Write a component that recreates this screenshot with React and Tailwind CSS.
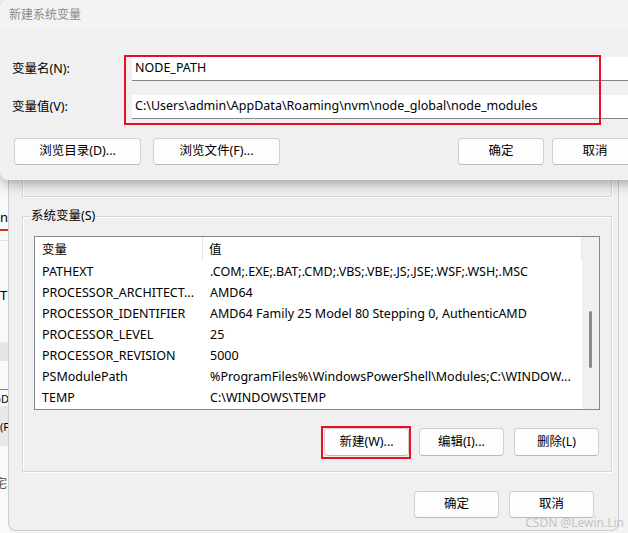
import React from "react";

function Btn({ className = "", children }) {
  return (
    <div
      className={
        "flex items-center justify-center bg-[#fdfdfd] border border-[#d0d0d0] border-b-[#b9b9b9] rounded-[4px] text-[12.5px] text-black " +
        className
      }
    >
      {children}
    </div>
  );
}

const rows = [
  ["PATHEXT", ".COM;.EXE;.BAT;.CMD;.VBS;.VBE;.JS;.JSE;.WSF;.WSH;.MSC"],
  ["PROCESSOR_ARCHITECT...", "AMD64"],
  ["PROCESSOR_IDENTIFIER", "AMD64 Family 25 Model 80 Stepping 0, AuthenticAMD"],
  ["PROCESSOR_LEVEL", "25"],
  ["PROCESSOR_REVISION", "5000"],
  ["PSModulePath", "%ProgramFiles%\\WindowsPowerShell\\Modules;C:\\WINDOW..."],
  ["TEMP", "C:\\WINDOWS\\TEMP"],
];

export default function App() {
  return (
    <div className="relative w-[628px] h-[533px] overflow-hidden bg-[#f3f3f3] font-['Noto_Sans','Noto_Sans_CJK_SC',sans-serif] text-black">
      {/* window behind, left strip */}
      <div className="absolute left-0 top-0 w-[9px] h-[533px] bg-[#f9f9f9] overflow-hidden flex flex-col text-[13px] leading-none">
        <div className="h-[205px] shrink-0" />
        <div className="h-[24px] shrink-0 flex items-center justify-end whitespace-nowrap pr-[1px]">admin</div>
        <div className="h-[2px] shrink-0 bg-[#d42b2b]" />
        <div className="h-[10px] shrink-0 border-b border-[#e3e3e3]" />
        <div className="h-[45px] shrink-0" />
        <div className="h-[18px] shrink-0 flex items-center whitespace-nowrap">TE</div>
        <div className="h-[38px] shrink-0" />
        <div className="h-[19px] shrink-0 bg-[#e6e6e6]" />
        <div className="h-[28px] shrink-0" />
        <div className="h-[17px] shrink-0 border-t border-[#4a8fd8] flex items-center justify-end whitespace-nowrap text-[11px]">oD</div>
        <div className="h-[40px] shrink-0 bg-[#e8e8e8] flex items-center whitespace-nowrap text-[11px]">(F</div>
        <div className="h-[27px] shrink-0" />
        <div className="h-[22px] shrink-0 flex items-center whitespace-nowrap text-[12px] text-[#555] -ml-[5px]">宅</div>
      </div>

      {/* environment variables window */}
      <div className="absolute left-[8px] top-0 w-[611px] h-[531px] bg-[#f0f0f0] border-l border-r border-b border-[#cbcbcb] rounded-b-[8px] flex flex-col">
        {/* user variables group (bottom part visible) */}
        <div className="ml-[13px] w-[590px] h-[197px] shrink-0 border border-[#d6d6d6] shadow-[1px_1px_0_#ffffff,inset_1px_1px_0_#ffffff]" />

        {/* system variables group */}
        <div className="relative ml-[13px] mt-[19px] w-[590px] h-[256px] shrink-0 border border-[#d6d6d6] shadow-[1px_1px_0_#ffffff,inset_1px_1px_0_#ffffff] pl-[11px] pt-[19px] pr-[12px] flex flex-col">
          <div className="absolute left-[7px] top-[-10px] px-[1px] bg-[#f0f0f0] text-[12.5px] leading-[18px]">系统变量(S)</div>

          <div className="w-[566px] h-[174px] border border-[#828790] bg-white flex text-[12.5px]">
            <div className="flex-1 flex flex-col">
              <div className="h-[23px] flex border-r border-[#e8e8e8] shrink-0">
                <div className="w-[168px] pl-[7px] pt-[3px] flex items-center border-r border-[#e3e3e3]">变量</div>
                <div className="pl-[6px] pt-[3px] flex items-center">值</div>
              </div>
              {rows.map(([k, v]) => (
                <div key={k} className="h-[21px] pt-[4px] flex items-center whitespace-nowrap shrink-0">
                  <div className="w-[168px] pl-[7px]">{k}</div>
                  <div className="pl-[7px]">{v}</div>
                </div>
              ))}
            </div>
            <div className="w-[17px] bg-[#f0f0f0] flex flex-col items-center pt-[74px]">
              <div className="w-[3px] h-[57px] rounded-full bg-[#8a8a8a]" />
            </div>
          </div>

          <div className="mt-[18px] flex justify-end gap-[10px]">
            <div className="relative">
              <Btn className="w-[85px] h-[28px]">新建(W)...</Btn>
              <div className="absolute left-[-3px] right-[-2px] top-[-2px] bottom-[-3px] border-2 border-[#e81123]" />
            </div>
            <Btn className="w-[85px] h-[28px]">编辑(I)...</Btn>
            <Btn className="w-[85px] h-[28px]">删除(L)</Btn>
          </div>
        </div>

        <div className="mt-[19px] flex justify-end gap-[10px] pr-[24px]">
          <Btn className="w-[85px] h-[27px]">确定</Btn>
          <Btn className="w-[85px] h-[27px]">取消</Btn>
        </div>
      </div>

      {/* new system variable dialog */}
      <div className="absolute left-0 top-0 w-[652px] h-[180px] bg-[#f0f0f0] rounded-[8px] shadow-[0_3px_14px_rgba(0,0,0,0.35)] overflow-hidden flex flex-col">
        <div className="h-[29px] shrink-0 bg-[#f3f3f3] pl-[9px] flex items-center text-[12px] text-[#8b8b8b]">新建系统变量</div>
        <div className="relative flex flex-col pt-[28px] text-[12.5px]">
          <div className="flex h-[24px]">
            <div className="w-[132px] pl-[12px] flex items-center">变量名(N):</div>
            <div className="flex-1 bg-white border-b border-[#868686] pl-[3px] flex items-center">NODE_PATH</div>
          </div>
          <div className="flex h-[24px] mt-[14px]">
            <div className="w-[132px] pl-[12px] flex items-center">变量值(V):</div>
            <div className="flex-1 bg-white border-b border-[#868686] pl-[3px] flex items-center whitespace-nowrap">
              C:\Users\admin\AppData\Roaming\nvm\node_global\node_modules
            </div>
          </div>
          <div className="mt-[19px] h-[27px] flex px-[14px]">
            <div className="flex gap-[12px]">
              <Btn className="w-[127px] h-[27px]">浏览目录(D)...</Btn>
              <Btn className="w-[127px] h-[27px]">浏览文件(F)...</Btn>
            </div>
            <div className="ml-auto flex gap-[8px]">
              <Btn className="w-[86px] h-[27px]">确定</Btn>
              <Btn className="w-[86px] h-[27px]">取消</Btn>
            </div>
          </div>
        </div>
        <div className="absolute left-[124px] top-[55px] w-[477px] h-[70px] border-2 border-[#e81123]" />
      </div>

      <div className="absolute right-[4px] bottom-[4px] text-[12px] leading-none text-[#c4c4c4] whitespace-nowrap">CSDN @Lewin.Lin</div>
    </div>
  );
}
